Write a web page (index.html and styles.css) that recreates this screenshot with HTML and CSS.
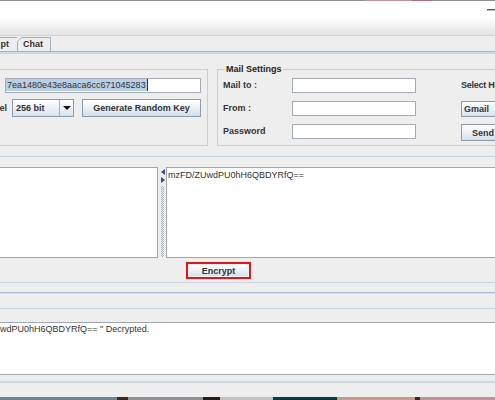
FILE: index.html
```html
<!DOCTYPE html>
<html>
<head>
<meta charset="utf-8">
<link rel="stylesheet" href="styles.css">
</head>
<body>
<div class="window">
  <div class="topline"></div>
  <div class="titlebar"><span class="min"></span></div>
  <div class="tabbar">
    <div class="tab tab-first"><span>pt</span></div>
    <div class="tab tab-chat">
      <svg class="tab-shape" width="34" height="14" viewBox="0 0 34 14"><polyline points="0.5,14 0.5,4.5 4.5,0.5 33.5,0.5 33.5,14" fill="none" stroke="#9fb0c2" stroke-width="1"/></svg>
      <span class="tab-text">Chat</span>
    </div>
  </div>
  <div class="tabline"></div>

  <div class="settings">
    <div class="keypanel">
      <div class="field keyfield"><span class="sel">7ea1480e43e8aaca6cc671045283</span><span class="caret"></span></div>
      <div class="krow">
        <span class="klabel">el</span>
        <div class="combo combo-bits"><span class="combo-text">256 bit</span><span class="combo-arrow"><span class="tri"></span></span></div>
        <div class="btn btn-gen">Generate Random Key</div>
      </div>
    </div>
    <div class="mailpanel">
      <div class="legend">Mail Settings</div>
      <div class="mailgrid">
        <span class="mlabel">Mail to :</span>
        <div class="field"></div>
        <span class="mlabel col4 host-label">Select H</span>
        <span class="mlabel">From :</span>
        <div class="field"></div>
        <div class="combo combo-host col4"><span class="combo-text">Gmail</span></div>
        <span class="mlabel">Password</span>
        <div class="field"></div>
        <div class="btn btn-send col4">Send</div>
      </div>
    </div>
  </div>

  <div class="sep"></div>

  <div class="split">
    <div class="ta ta-left"></div>
    <div class="divider">
      <span class="arrow-l"></span>
      <span class="arrow-r"></span>
      <span class="bumps"></span>
    </div>
    <div class="ta ta-right">mzFD/ZUwdPU0hH6QBDYRfQ==</div>
  </div>

  <div class="actions">
    <div class="btn btn-encrypt">Encrypt</div>
  </div>

  <div class="line line-a"></div>
  <div class="line line-b"></div>
  <div class="line line-c"></div>
  <div class="ta ta-log">wdPU0hH6QBDYRfQ== " Decrypted.</div>
  <div class="line line-d"></div>
  <div class="desktop"></div>
</div>
</body>
</html>
```
FILE: styles.css
```css
* { box-sizing: border-box; }
html, body { margin: 0; padding: 0; }
body {
  width: 495px;
  height: 400px;
  overflow: hidden;
  background: #eeeeee;
  font-family: "Liberation Sans", Arial, sans-serif;
  font-size: 9px;
  color: #333333;
}
.window {
  width: 495px;
  height: 400px;
  overflow: hidden;
  display: flex;
  flex-direction: column;
}
.topline {
  height: 1px;
  flex: none;
  background: linear-gradient(to right, #8f8f8f 365px, #c4929e 365px, #c4929e 412px, #b06a7c 412px, #b06a7c 432px, #8f8f8f 432px);
}
.titlebar {
  height: 35px;
  flex: none;
  background: linear-gradient(to bottom, #ffffff 0, #ffffff 16px, #e4e4e4 34px);
  border-bottom: 1px solid #d3d3d3;
  display: flex;
  justify-content: flex-end;
  align-items: flex-start;
  padding-top: 8px;
}
.min {
  width: 9px;
  height: 2px;
  border-top: 1px solid #5e5e5e;
  border-bottom: 1px solid #b5b5b5;
  margin-right: -1px;
}
.tabbar {
  height: 15px;
  flex: none;
  display: flex;
  align-items: flex-end;
}
.tab {
  height: 14px;
  display: flex;
  align-items: center;
  font-weight: bold;
  line-height: 11px;
  color: #333333;
  flex: none;
}
.tab-first {
  width: 37px;
  margin-left: -20px;
  border-top: 1px solid #9fb0c2;
  border-left: 1px solid #9fb0c2;
  justify-content: flex-end;
  padding-right: 8px;
}
.tab-chat {
  position: relative;
  width: 34px;
  padding-left: 6px;
}
.tab-shape { position: absolute; left: 0; top: 0; }
.tab-text { position: relative; }
.tabline {
  height: 3px;
  flex: none;
  border-top: 1px solid #a3b6cb;
  background: #c9d9ea;
}

.settings {
  display: flex;
  padding-top: 15px;
  flex: none;
}
.keypanel {
  flex: none;
  width: 218px;
  margin-left: -10px;
  border: 1px solid #c3cfdb;
  padding: 8px 6px 0 14px;
  display: flex;
  flex-direction: column;
  gap: 6px;
}
.field {
  height: 15px;
  background: #ffffff;
  border: 1px solid #a5acb5;
}
.keyfield {
  display: flex;
  align-items: flex-start;
}
.sel {
  background: #b8cfe5;
  padding: 0 1px;
  height: 12px;
  line-height: 12px;
  color: #333333;
  white-space: nowrap;
}
.caret {
  width: 1px;
  height: 12px;
  background: #333333;
}
.krow {
  display: flex;
  height: 18px;
  align-items: stretch;
  margin-left: -14px;
}
.klabel {
  width: 16px;
  text-align: right;
  font-weight: bold;
  line-height: 18px;
  white-space: nowrap;
}
.combo {
  display: flex;
  align-items: stretch;
  border: 1px solid #8e9aa8;
  background: linear-gradient(to bottom, #ffffff 0%, #edf2f7 45%, #d9e3ee 100%);
  font-weight: bold;
}
.combo-text {
  flex: 1;
  display: flex;
  align-items: center;
  padding-left: 3px;
  white-space: nowrap;
}
.combo-bits {
  width: 62px;
  margin-left: 5px;
}
.combo-arrow {
  width: 14px;
  border-left: 1px solid #a9b3be;
  display: flex;
  align-items: center;
  justify-content: center;
}
.tri {
  width: 0;
  height: 0;
  border-left: 4px solid transparent;
  border-right: 4px solid transparent;
  border-top: 4px solid #111111;
}
.btn {
  display: flex;
  align-items: center;
  justify-content: center;
  border: 1px solid #8e9aa8;
  background: linear-gradient(to bottom, #ffffff 0%, #edf2f7 45%, #d2dfec 100%);
  font-weight: bold;
  color: #333333;
  white-space: nowrap;
}
.btn-gen {
  width: 119px;
  margin-left: 8px;
}

.mailpanel {
  flex: none;
  width: 320px;
  margin-left: 9px;
  border: 1px solid #c3cfdb;
  padding: 0 0 6px 5px;
}
.legend {
  width: fit-content;
  margin: -6px 0 0 2px;
  padding: 0 1px;
  background: #eeeeee;
  font-weight: bold;
  line-height: 11px;
  color: #222222;
}
.mailgrid {
  margin-top: 3px;
  display: grid;
  grid-template-columns: 69px 124px 45px 80px;
  grid-template-rows: 15px 15px 15px;
  row-gap: 8px;
  align-items: center;
}
.mlabel {
  font-weight: bold;
  white-space: nowrap;
  line-height: 11px;
}
.host-label { letter-spacing: -0.25px; }
.col4 { grid-column: 4; }
.combo-host {
  height: 16px;
  align-self: start;
  width: 80px;
}
.combo-host .combo-text { padding-left: 2px; }
.btn-send {
  height: 17px;
  align-self: start;
  width: 44px;
}

.sep {
  height: 1px;
  flex: none;
  margin-top: 10px;
  background: #c6d5e4;
}
.split {
  display: flex;
  height: 91px;
  margin-top: 10px;
  flex: none;
}
.ta {
  background: #ffffff;
  border: 1px solid #9ea7b2;
  flex-shrink: 0;
  color: #333333;
  line-height: 11px;
  white-space: nowrap;
}
.ta-left {
  width: 160px;
  margin-left: -2px;
}
.divider {
  width: 8px;
  flex-shrink: 0;
  display: flex;
  flex-direction: column;
  padding: 2px 0 1px 3px;
}
.arrow-l {
  width: 0;
  height: 0;
  border-right: 4px solid #2f5282;
  border-top: 3px solid transparent;
  border-bottom: 3px solid transparent;
}
.arrow-r {
  width: 0;
  height: 0;
  margin-top: 2px;
  border-left: 4px solid #2f5282;
  border-top: 3px solid transparent;
  border-bottom: 3px solid transparent;
}
.bumps {
  flex: 1;
  width: 3px;
  margin-top: 3px;
  background: repeating-conic-gradient(#a4b0be 0 25%, transparent 0 50%) 0 0 / 2px 2px;
}
.ta-right {
  width: 340px;
  padding: 2px 0 0 1px;
}
.actions {
  height: 24px;
  flex: none;
  padding-top: 4px;
  padding-left: 186px;
  display: flex;
  align-items: flex-start;
}
.btn-encrypt {
  width: 65px;
  height: 17px;
  border: 2px solid #e5141b;
  box-shadow: inset 0 0 0 1px #f4f4f4;
}
.line { flex: none; }
.line-a { height: 1px; background: #c5d5e5; }
.line-b { height: 2px; margin-top: 9px; border-top: 1px solid #a9bdd3; background: #d5e0eb; }
.line-c { height: 1px; margin-top: 14px; background: #c8d7e6; }
.ta-log {
  width: 510px;
  height: 53px;
  margin-left: -2px;
  margin-top: 13px;
  padding: 1px 0 0 1px;
  flex: none;
}
.line-d { height: 2px; margin-top: 6px; background: #cad9e8; }
.desktop {
  height: 3px;
  flex: none;
  margin-top: auto;
  background: linear-gradient(to right,
    #76838a 0, #76838a 117px,
    #3a2a22 117px, #3a2a22 128px,
    #8a9096 128px, #8a9096 203px,
    #2a1c14 203px, #2a1c14 220px,
    #c2c2c2 220px, #c2c2c2 273px,
    #0d3c3e 273px, #0d3c3e 337px,
    #c29c92 337px, #c29c92 415px,
    #3a2622 415px, #3a2622 420px,
    #c0929c 420px, #c0929c 495px);
}
```
